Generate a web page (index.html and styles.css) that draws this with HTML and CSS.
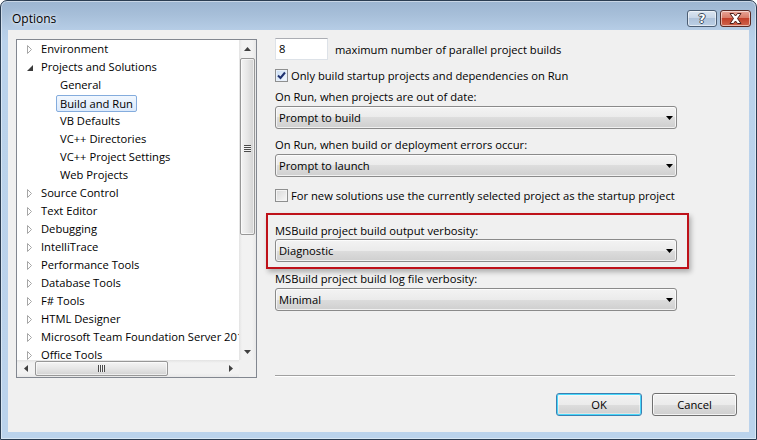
FILE: index.html
```html
<!DOCTYPE html>
<html>
<head>
<meta charset="utf-8">
<title>Options</title>
<link rel="stylesheet" href="styles.css">
</head>
<body>
<div class="window">
  <div class="titlebar">
    <span class="title">Options</span>
    <div class="caption-btns">
      <div class="cbtn help"><span>?</span></div>
      <div class="cbtn close">
        <svg width="13" height="11" viewBox="0 0 13 11"><path d="M1 0.5 H4.5 L6.5 3 L8.5 0.5 H12 L8.5 5.5 L12 10.5 H8.5 L6.5 8 L4.5 10.5 H1 L4.5 5.5 Z" fill="#fff" stroke="#4a1f1a" stroke-width="1" stroke-linejoin="round"/></svg>
      </div>
    </div>
  </div>
  <div class="client">
    <div class="main">
      <div class="tree">
        <div class="tree-list">
          <div class="node"><span class="tw"><svg width="6" height="9" viewBox="0 0 6 9"><path d="M0.5 0.5 L4.5 4.5 L0.5 8.5 Z" fill="#fff" stroke="#a6a6a6"/></svg></span>Environment</div>
          <div class="node"><span class="tw"><svg width="6" height="6" viewBox="0 0 6 6"><path d="M0 6 H6 V0 Z" fill="#3c3c3c"/></svg></span>Projects and Solutions</div>
          <div class="node child">General</div>
          <div class="node child"><span class="sel">Build and Run</span></div>
          <div class="node child">VB Defaults</div>
          <div class="node child">VC++ Directories</div>
          <div class="node child">VC++ Project Settings</div>
          <div class="node child">Web Projects</div>
          <div class="node"><span class="tw"><svg width="6" height="9" viewBox="0 0 6 9"><path d="M0.5 0.5 L4.5 4.5 L0.5 8.5 Z" fill="#fff" stroke="#a6a6a6"/></svg></span>Source Control</div>
          <div class="node"><span class="tw"><svg width="6" height="9" viewBox="0 0 6 9"><path d="M0.5 0.5 L4.5 4.5 L0.5 8.5 Z" fill="#fff" stroke="#a6a6a6"/></svg></span>Text Editor</div>
          <div class="node"><span class="tw"><svg width="6" height="9" viewBox="0 0 6 9"><path d="M0.5 0.5 L4.5 4.5 L0.5 8.5 Z" fill="#fff" stroke="#a6a6a6"/></svg></span>Debugging</div>
          <div class="node"><span class="tw"><svg width="6" height="9" viewBox="0 0 6 9"><path d="M0.5 0.5 L4.5 4.5 L0.5 8.5 Z" fill="#fff" stroke="#a6a6a6"/></svg></span>IntelliTrace</div>
          <div class="node"><span class="tw"><svg width="6" height="9" viewBox="0 0 6 9"><path d="M0.5 0.5 L4.5 4.5 L0.5 8.5 Z" fill="#fff" stroke="#a6a6a6"/></svg></span>Performance Tools</div>
          <div class="node"><span class="tw"><svg width="6" height="9" viewBox="0 0 6 9"><path d="M0.5 0.5 L4.5 4.5 L0.5 8.5 Z" fill="#fff" stroke="#a6a6a6"/></svg></span>Database Tools</div>
          <div class="node"><span class="tw"><svg width="6" height="9" viewBox="0 0 6 9"><path d="M0.5 0.5 L4.5 4.5 L0.5 8.5 Z" fill="#fff" stroke="#a6a6a6"/></svg></span>F# Tools</div>
          <div class="node"><span class="tw"><svg width="6" height="9" viewBox="0 0 6 9"><path d="M0.5 0.5 L4.5 4.5 L0.5 8.5 Z" fill="#fff" stroke="#a6a6a6"/></svg></span>HTML Designer</div>
          <div class="node"><span class="tw"><svg width="6" height="9" viewBox="0 0 6 9"><path d="M0.5 0.5 L4.5 4.5 L0.5 8.5 Z" fill="#fff" stroke="#a6a6a6"/></svg></span>Microsoft Team Foundation Server 2010</div>
          <div class="node"><span class="tw"><svg width="6" height="9" viewBox="0 0 6 9"><path d="M0.5 0.5 L4.5 4.5 L0.5 8.5 Z" fill="#fff" stroke="#a6a6a6"/></svg></span>Office Tools</div>
        </div>
        <div class="vscroll">
          <div class="sbtn"><svg width="7" height="4" viewBox="0 0 7 4"><path d="M3.5 0 L7 4 H0 Z" fill="#404040"/></svg></div>
          <div class="vthumb"><span class="grip-h"></span></div>
          <div class="sbtn bottom"><svg width="7" height="4" viewBox="0 0 7 4"><path d="M0 0 H7 L3.5 4 Z" fill="#404040"/></svg></div>
        </div>
        <div class="hscroll">
          <div class="sbtn"><svg width="4" height="7" viewBox="0 0 4 7"><path d="M4 0 V7 L0 3.5 Z" fill="#404040"/></svg></div>
          <div class="hthumb"><span class="grip-v"></span></div>
          <div class="sbtn right"><svg width="4" height="7" viewBox="0 0 4 7"><path d="M0 0 L4 3.5 L0 7 Z" fill="#404040"/></svg></div>
        </div>
        <div class="corner"></div>
      </div>

      <div class="panel">
        <div class="row num-row">
          <div class="numbox">8</div>
          <span class="num-label">maximum number of parallel project builds</span>
        </div>
        <div class="row check-row first-check">
          <span class="checkbox checked"><svg width="9" height="9" viewBox="0 0 9 9"><path d="M1 4.5 L3.5 7 L8 1.5" fill="none" stroke="#1e3170" stroke-width="2"/></svg></span>
          <span>Only build startup projects and dependencies on Run</span>
        </div>
        <div class="label l1">On Run, when projects are out of date:</div>
        <div class="combo"><span>Prompt to build</span><svg class="arrow" width="7" height="4" viewBox="0 0 7 4"><path d="M0 0 H7 L3.5 4 Z" fill="#000"/></svg></div>
        <div class="label l2">On Run, when build or deployment errors occur:</div>
        <div class="combo"><span>Prompt to launch</span><svg class="arrow" width="7" height="4" viewBox="0 0 7 4"><path d="M0 0 H7 L3.5 4 Z" fill="#000"/></svg></div>
        <div class="row check-row second-check">
          <span class="checkbox"></span>
          <span>For new solutions use the currently selected project as the startup project</span>
        </div>
        <div class="highlight">
          <div class="label">MSBuild project build output verbosity:</div>
          <div class="combo"><span>Diagnostic</span><svg class="arrow" width="7" height="4" viewBox="0 0 7 4"><path d="M0 0 H7 L3.5 4 Z" fill="#000"/></svg></div>
        </div>
        <div class="label l4">MSBuild project build log file verbosity:</div>
        <div class="combo"><span>Minimal</span><svg class="arrow" width="7" height="4" viewBox="0 0 7 4"><path d="M0 0 H7 L3.5 4 Z" fill="#000"/></svg></div>
        <div class="sep"></div>
      </div>
    </div>
    <div class="buttons">
      <div class="btn default">OK</div>
      <div class="btn">Cancel</div>
    </div>
  </div>
</div>
</body>
</html>
```
FILE: styles.css
```css
* { box-sizing: border-box; }
html, body { margin: 0; padding: 0; }
body {
  width: 757px;
  height: 440px;
  overflow: hidden;
  background: #fff;
  font-family: "Open Sans", "Noto Sans", sans-serif;
  font-size: 11.2px;
  color: #000;
}
.window {
  width: 757px;
  height: 440px;
  display: flex;
  flex-direction: column;
  border: 1px solid #2b3d52;
  border-radius: 7px 7px 0 0;
  background: linear-gradient(#9cb5d1 0, #a7bfd9 14px, #b6cde6 29px, #bad2eb 40px, #bbd3ec 100%);
  box-shadow: inset 0 0 0 1px rgba(255,255,255,0.45);
  padding: 0 7px 7px 7px;
}
.titlebar {
  height: 29px;
  display: flex;
  align-items: flex-start;
  justify-content: space-between;
}
.title {
  padding: 10px 0 0 4px;
  font-size: 12px;
  line-height: 16px;
  color: #000;
  text-shadow: 0 0 6px rgba(255,255,255,0.9), 0 0 3px rgba(255,255,255,0.8);
}
.caption-btns {
  display: flex;
  gap: 3px;
  margin-top: 9px;
  margin-right: -2px;
}
.cbtn {
  height: 17px;
  border-radius: 3px;
  display: flex;
  align-items: center;
  justify-content: center;
  border: 1px solid #4c5e74;
  box-shadow: inset 0 0 0 1px rgba(255,255,255,0.55);
}
.help {
  width: 30px;
  background: linear-gradient(#dbe5f1, #c5d4e6 50%, #aec2da 50%, #bcd0e6);
}
.help span {
  font-family: "DejaVu Sans", sans-serif;
  font-weight: bold;
  font-size: 12px;
  line-height: 12px;
  color: #fff;
  text-shadow: 1px 0 0 #3d4a5a, -1px 0 0 #3d4a5a, 0 1px 0 #3d4a5a, 0 -1px 0 #3d4a5a;
}
.close {
  width: 31px;
  border-color: #5a2a24;
  background: linear-gradient(#e8a598, #d97c68 45%, #c2402a 50%, #d0644c);
}
.client {
  flex: 1;
  background: #f0f0f0;
  display: flex;
  flex-direction: column;
  padding: 9px 12px 0 8px;
}
.main {
  display: flex;
  gap: 18px;
  height: 339px;
}
.tree {
  width: 241px;
  height: 339px;
  border: 1px solid #828790;
  background: #fff;
  display: grid;
  grid-template-columns: 222px 17px;
  grid-template-rows: 320px 17px;
}
.tree-list {
  overflow: hidden;
  white-space: nowrap;
}
.node {
  height: 18px;
  line-height: 18px;
  display: flex;
  align-items: center;
}
.tw {
  width: 24px;
  flex: none;
  display: flex;
  align-items: center;
  padding-left: 10px;
  padding-top: 1px;
}
.node.child { padding-left: 43px; }
.sel {
  display: inline-block;
  height: 17px;
  line-height: 15px;
  margin-left: -4px;
  padding: 0 3px;
  border: 1px solid #84acdd;
  border-radius: 2px;
  background: linear-gradient(#f1f7fe, #dceafc);
  margin-top: 1px;
}
.vscroll {
  display: flex;
  flex-direction: column;
  background: linear-gradient(90deg, #e3e3e3, #f2f2f2 3px, #f2f2f2 13px, #e8e8e8);
}
.sbtn {
  width: 17px;
  height: 17px;
  flex: none;
  display: flex;
  align-items: center;
  justify-content: center;
}
.sbtn.bottom { margin-top: auto; }
.sbtn.right { margin-left: auto; }
.vthumb {
  margin: 1px 1px 0 1px;
  height: 177px;
  border: 1px solid #979797;
  border-radius: 2px;
  background: linear-gradient(90deg, #f4f4f4, #e6e6e6 50%, #d2d2d2);
  box-shadow: inset 0 0 0 1px rgba(255,255,255,0.6);
  display: flex;
  align-items: center;
  justify-content: center;
}
.grip-h {
  width: 7px;
  height: 7px;
  background: repeating-linear-gradient(#4b4b4b 0, #4b4b4b 1px, #f4f4f4 1px, #f4f4f4 2px);
  margin-top: 4px;
}
.hscroll {
  display: flex;
  background: linear-gradient(#e3e3e3, #f2f2f2 3px, #f2f2f2 13px, #e8e8e8);
}
.hthumb {
  margin: 1px 0 1px 1px;
  width: 133px;
  border: 1px solid #979797;
  border-radius: 2px;
  background: linear-gradient(#f4f4f4, #e6e6e6 50%, #d2d2d2);
  box-shadow: inset 0 0 0 1px rgba(255,255,255,0.6);
  display: flex;
  align-items: center;
  justify-content: center;
}
.grip-v {
  width: 7px;
  height: 7px;
  background: repeating-linear-gradient(90deg, #4b4b4b 0, #4b4b4b 1px, #f4f4f4 1px, #f4f4f4 2px);
}
.corner { background: #f0f0f0; }

.panel {
  width: 460px;
  display: flex;
  flex-direction: column;
}
.row {
  display: flex;
  align-items: center;
}
.num-row { margin-top: -1px; height: 22px; }
.numbox {
  width: 53px;
  height: 22px;
  background: #fff;
  border: 1px solid #dde2e8;
  border-top-color: #abadb3;
  padding-left: 3px;
  line-height: 20px;
}
.num-label { margin-left: 7px; }
.check-row { height: 16px; gap: 3px; }
.first-check { margin-top: 7px; }
.second-check { margin-top: 10px; }
.checkbox {
  width: 13px;
  height: 13px;
  flex: none;
  border: 1px solid #8e8f8f;
  background: linear-gradient(135deg, #d8d8d8, #f7f7f7);
  box-shadow: inset 0 0 0 1px #f4f4f4;
  display: flex;
  align-items: center;
  justify-content: center;
}
.checkbox.checked {
  background: linear-gradient(135deg, #c8dcf3, #f4f9ff);
  box-shadow: inset 0 0 0 1px #e8f0fa;
}
.label { height: 16px; line-height: 16px; }
.l1 { margin-top: 6px; }
.l2 { margin-top: 8px; }
.l4 { margin-top: 2px; }
.combo {
  width: 402px;
  height: 23px;
  flex: none;
  margin-top: 1px;
  border: 1px solid #8a8a8a;
  border-radius: 3px;
  background: linear-gradient(#f3f3f3, #ebebeb 50%, #dddddd 50%, #cfcfcf);
  box-shadow: inset 0 0 0 1px rgba(255,255,255,0.7);
  display: flex;
  align-items: center;
  padding-left: 3px;
}
.combo .arrow { margin-left: auto; margin-right: 3px; }
.highlight {
  margin-top: 10px;
  margin-left: -9px;
  width: 423px;
  height: 56px;
  border: 2px solid #be1119;
  padding: 8px 10px 5px 7px;
  box-shadow: 2px 3px 5px rgba(0,0,0,0.28);
}
.highlight .combo { margin-top: 0; }
.sep {
  margin-top: auto;
  margin-bottom: 1px;
  height: 2px;
  border-top: 1px solid #a0a0a0;
  border-bottom: 1px solid #ffffff;
}
.buttons {
  display: flex;
  justify-content: flex-end;
  gap: 10px;
  margin-top: 15px;
}
.btn {
  width: 85px;
  height: 23px;
  border: 1px solid #707070;
  border-radius: 3px;
  background: linear-gradient(#f2f2f2, #ebebeb 50%, #dddddd 50%, #cfcfcf);
  box-shadow: inset 0 0 0 1px rgba(255,255,255,0.75);
  display: flex;
  align-items: center;
  justify-content: center;
}
.btn.default {
  width: 86px;
  border-color: #3c7fb1;
  box-shadow: inset 0 0 0 1px #48d8fb, inset 0 0 0 2px rgba(255,255,255,0.4);
}
```
